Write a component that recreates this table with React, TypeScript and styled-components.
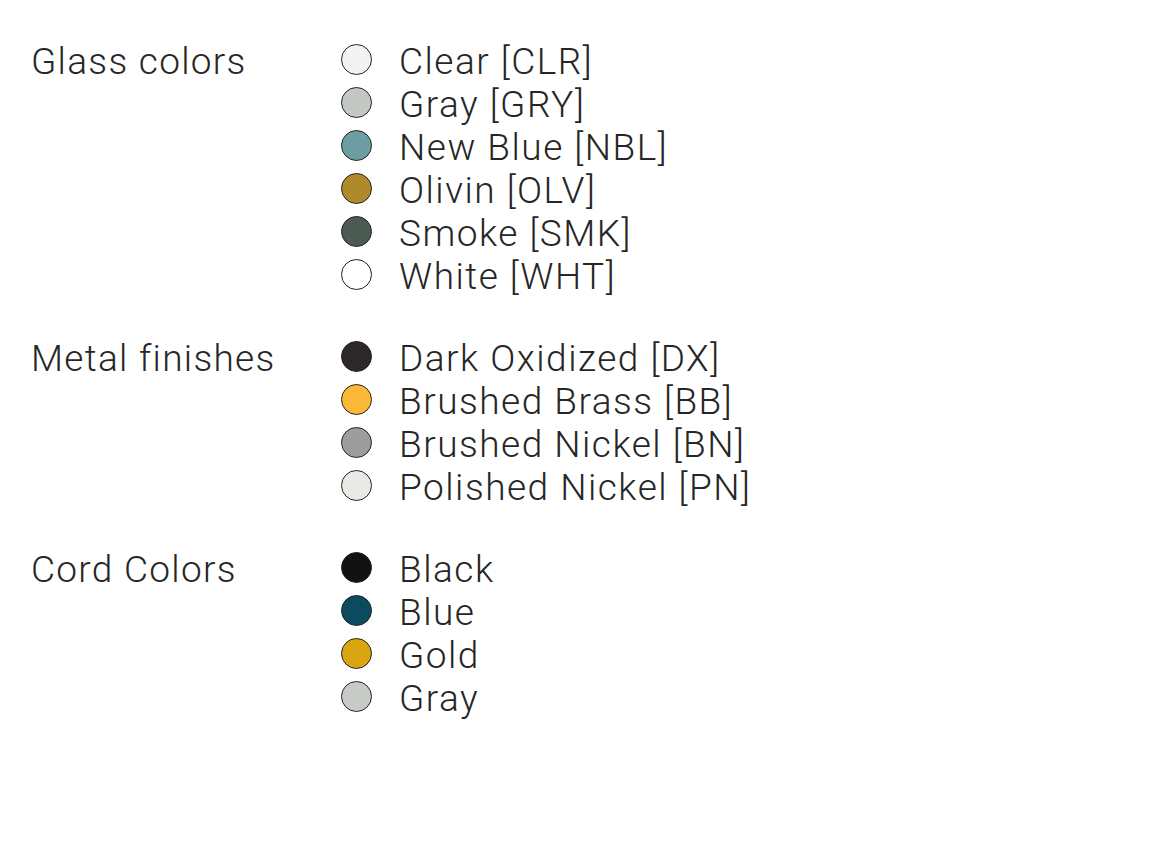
import styled, { createGlobalStyle } from "styled-components";

const GlobalStyle = createGlobalStyle`
  html, body {
    margin: 0;
    padding: 0;
    background: #ffffff;
  }
  body {
    font-family: Roboto, "Liberation Sans", sans-serif;
    color: #262626;
  }
`;

const Page = styled.div`
  width: 1151px;
  height: 863px;
  padding: 40px 0 0 31px;
  box-sizing: border-box;
  display: flex;
  flex-direction: column;
  gap: 39px;
`;

const Section = styled.section`
  display: grid;
  grid-template-columns: 310px 1fr;
`;

const Label = styled.div`
  font-size: 37px;
  font-weight: 300;
  line-height: 43px;
  letter-spacing: 1.3px;
`;

const List = styled.ul`
  list-style: none;
  margin: 0;
  padding: 0;
  display: flex;
  flex-direction: column;
`;

const Item = styled.li`
  display: flex;
  align-items: center;
  height: 43px;
  font-size: 37px;
  font-weight: 300;
  letter-spacing: 1.5px;
`;

const Swatch = styled.span<{ $color: string }>`
  width: 29px;
  height: 29px;
  border-radius: 50%;
  border: 1.6px solid #232323;
  background: ${(p) => p.$color};
  margin-right: 27px;
  margin-top: -4px;
  flex-shrink: 0;
`;

type Option = { name: string; color: string };

const groups: { title: string; options: Option[] }[] = [
  {
    title: "Glass colors",
    options: [
      { name: "Clear [CLR]", color: "#f3f3f2" },
      { name: "Gray [GRY]", color: "#c4c8c4" },
      { name: "New Blue [NBL]", color: "#6b9da1" },
      { name: "Olivin [OLV]", color: "#b0892a" },
      { name: "Smoke [SMK]", color: "#4b5a52" },
      { name: "White [WHT]", color: "#ffffff" },
    ],
  },
  {
    title: "Metal finishes",
    options: [
      { name: "Dark Oxidized [DX]", color: "#2c2827" },
      { name: "Brushed Brass [BB]", color: "#fbb837" },
      { name: "Brushed Nickel [BN]", color: "#9d9d9d" },
      { name: "Polished Nickel [PN]", color: "#e9e9e5" },
    ],
  },
  {
    title: "Cord Colors",
    options: [
      { name: "Black", color: "#121212" },
      { name: "Blue", color: "#0c4a5e" },
      { name: "Gold", color: "#d9a511" },
      { name: "Gray", color: "#c7cac6" },
    ],
  },
];

function App() {
  return (
    <>
      <GlobalStyle />
      <Page>
        {groups.map((g) => (
          <Section key={g.title}>
            <Label>{g.title}</Label>
            <List>
              {g.options.map((o) => (
                <Item key={o.name}>
                  <Swatch $color={o.color} />
                  {o.name}
                </Item>
              ))}
            </List>
          </Section>
        ))}
      </Page>
    </>
  );
}

export default App;
